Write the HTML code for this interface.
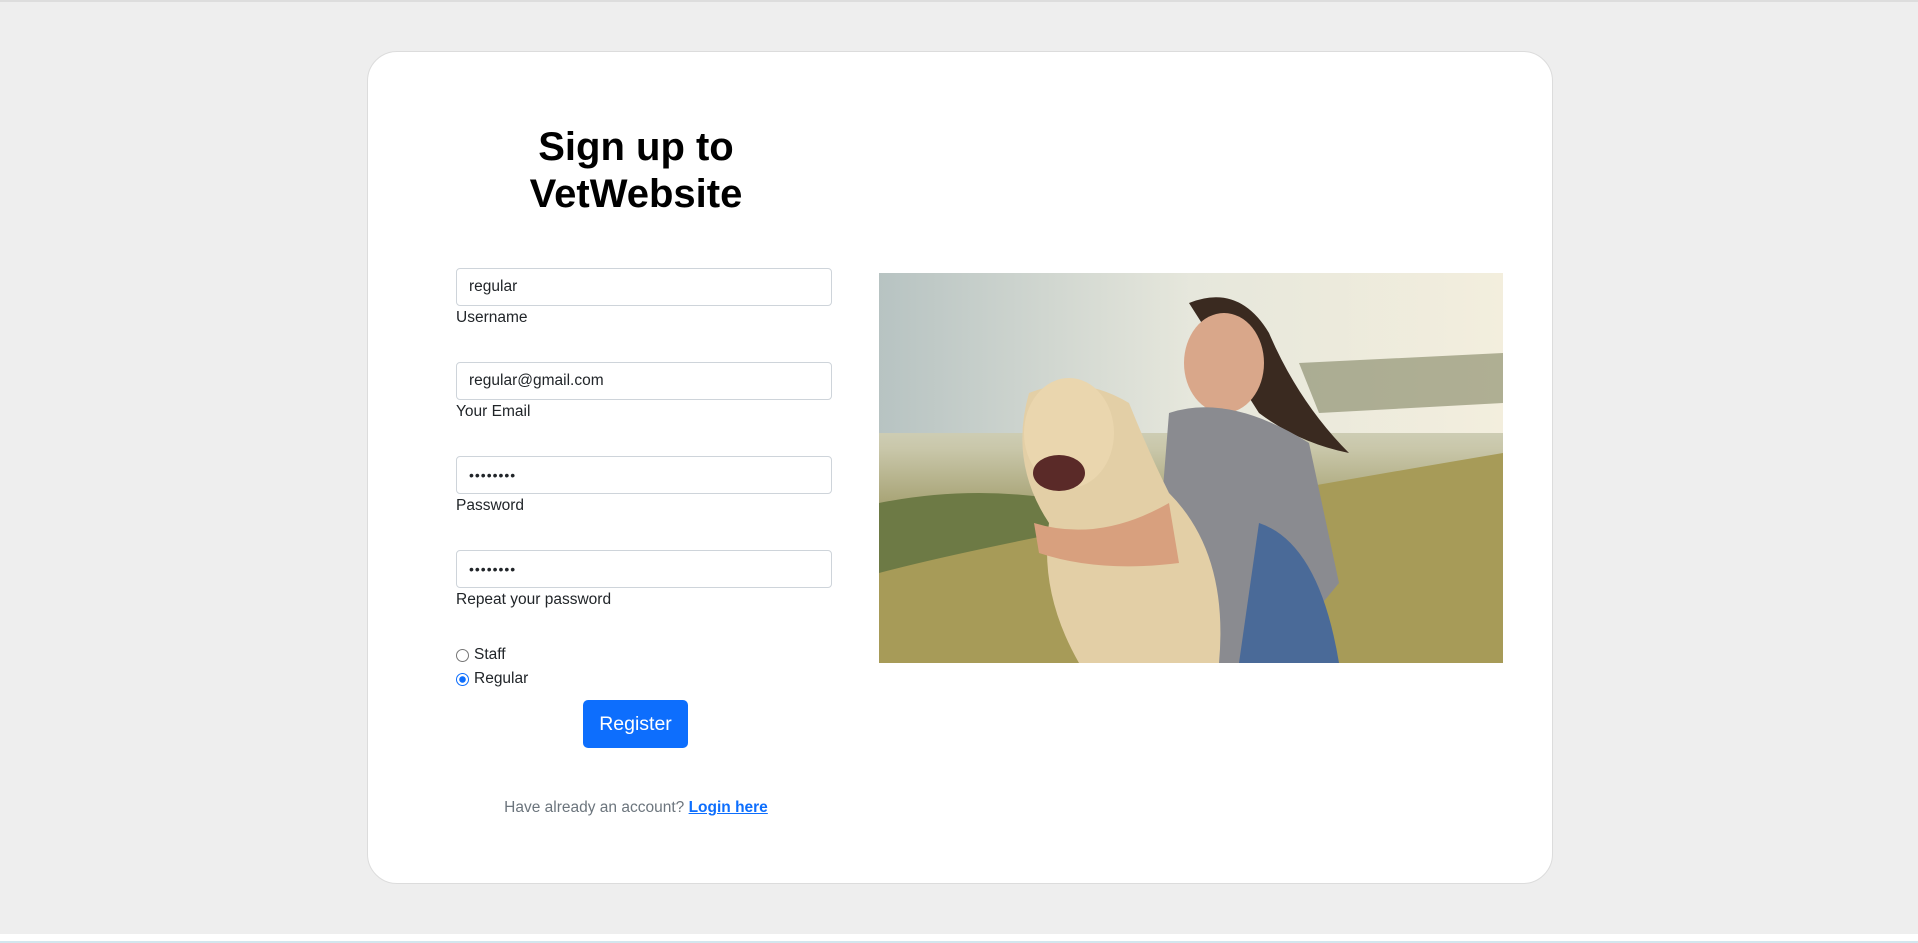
<!DOCTYPE html>
<html><head><meta charset="utf-8"><style>
*{box-sizing:border-box;margin:0;padding:0}
body{width:1918px;height:941px;background:#eeeeee;font-family:"Liberation Sans",sans-serif;position:relative;overflow:hidden;border-top:2px solid #ddd}
.card{position:absolute;left:367px;top:49px;width:1186px;height:833px;background:#fff;border:1px solid #dcdcdc;border-radius:30px}
h1{position:absolute;left:456px;width:360px;top:122px;text-align:center;font-size:40px;line-height:47px;font-weight:bold;color:#000}
.in{position:absolute;left:456px;width:376px;height:38px;border:1px solid #ced4da;border-radius:4px;font-size:15.5px;color:#212529;padding:0 12px;line-height:36px;background:#fff}
.lb{position:absolute;left:456px;font-size:15.5px;color:#212529}
.dots{letter-spacing:1px;font-size:14px}
.r{position:absolute;left:456px;font-size:15.5px;color:#212529;display:flex;align-items:center;gap:5px}
.rc{width:13px;height:13px;border:1px solid #767676;border-radius:50%;background:#fff}
.rc.on{border:1px solid #0d6efd;background:radial-gradient(circle,#0d6efd 0 3px,#fff 3.5px)}
.btn{position:absolute;left:583px;top:698px;width:105px;height:48px;background:#0d6efd;border-radius:5px;color:#fff;font-size:19.5px;text-align:center;line-height:48px}
.ft{position:absolute;left:456px;width:360px;top:797px;text-align:center;font-size:15.5px;color:#6c757d}
.ft a{color:#0d6efd;font-weight:bold;text-decoration:underline}
.img{position:absolute;left:879px;top:271px;width:624px;height:390px;overflow:hidden;background:linear-gradient(180deg,#b9c6c4 0%,#dfe3d9 25%,#c9c7aa 45%,#9a9560 65%,#b3a261 100%)}
.wh{position:absolute;left:0;top:932px;width:1918px;height:7px;background:#fff}
.bot{position:absolute;left:0;top:939px;width:1918px;height:2px;background:#d3e6ee}
</style></head><body>
<div class="card"></div>
<h1>Sign up to<br>VetWebsite</h1>
<div class="in" style="top:266px">regular</div><div class="lb" style="top:307px">Username</div>
<div class="in" style="top:360px">regular@gmail.com</div><div class="lb" style="top:401px">Your Email</div>
<div class="in dots" style="top:454px">••••••••</div><div class="lb" style="top:495px">Password</div>
<div class="in dots" style="top:548px">••••••••</div><div class="lb" style="top:589px">Repeat your password</div>
<div class="r" style="top:644px"><span class="rc"></span>Staff</div>
<div class="r" style="top:668px"><span class="rc on"></span>Regular</div>
<div class="btn">Register</div>
<div class="ft">Have already an account? <a>Login here</a></div>
<div class="img">
<svg width="624" height="390" viewBox="0 0 624 390">
<defs><linearGradient id="s" x1="0" y1="0" x2="1" y2="0"><stop offset="0" stop-color="#b7c3c2"/><stop offset="0.5" stop-color="#e6e7dc"/><stop offset="1" stop-color="#f3eedd"/></linearGradient></defs>
<rect width="624" height="160" fill="url(#s)"/>
<path d="M0 230 Q100 210 200 230 L200 390 L0 390Z" fill="#6d7a45"/>
<path d="M0 300 Q150 260 624 180 L624 390 L0 390Z" fill="#a79b58"/>
<path d="M420 90 L624 80 L624 130 L440 140Z" fill="#6c6f4a" opacity=".5"/>
<path d="M310 30 Q360 10 390 60 Q420 130 470 180 Q420 170 380 140 Z" fill="#3a2a20"/>
<ellipse cx="345" cy="90" rx="40" ry="50" fill="#d9a78a"/>
<path d="M290 140 Q350 120 430 170 L460 310 Q420 360 380 390 L270 390 Z" fill="#8a8b90"/>
<path d="M380 250 Q440 270 460 390 L360 390Z" fill="#4a6a98"/>
<path d="M150 120 Q200 100 250 130 Q270 180 290 220 Q350 280 340 390 L200 390 Q160 320 170 250 Q130 190 150 120Z" fill="#e3cfa6"/>
<ellipse cx="190" cy="160" rx="45" ry="55" fill="#ead6ae"/>
<ellipse cx="180" cy="200" rx="26" ry="18" fill="#5a2a28"/>
<path d="M155 250 Q220 270 290 230 L300 290 Q220 300 160 280Z" fill="#d8a07e"/>
</svg>
</div>
<div class="wh"></div>
<div class="bot"></div>
</body></html>
